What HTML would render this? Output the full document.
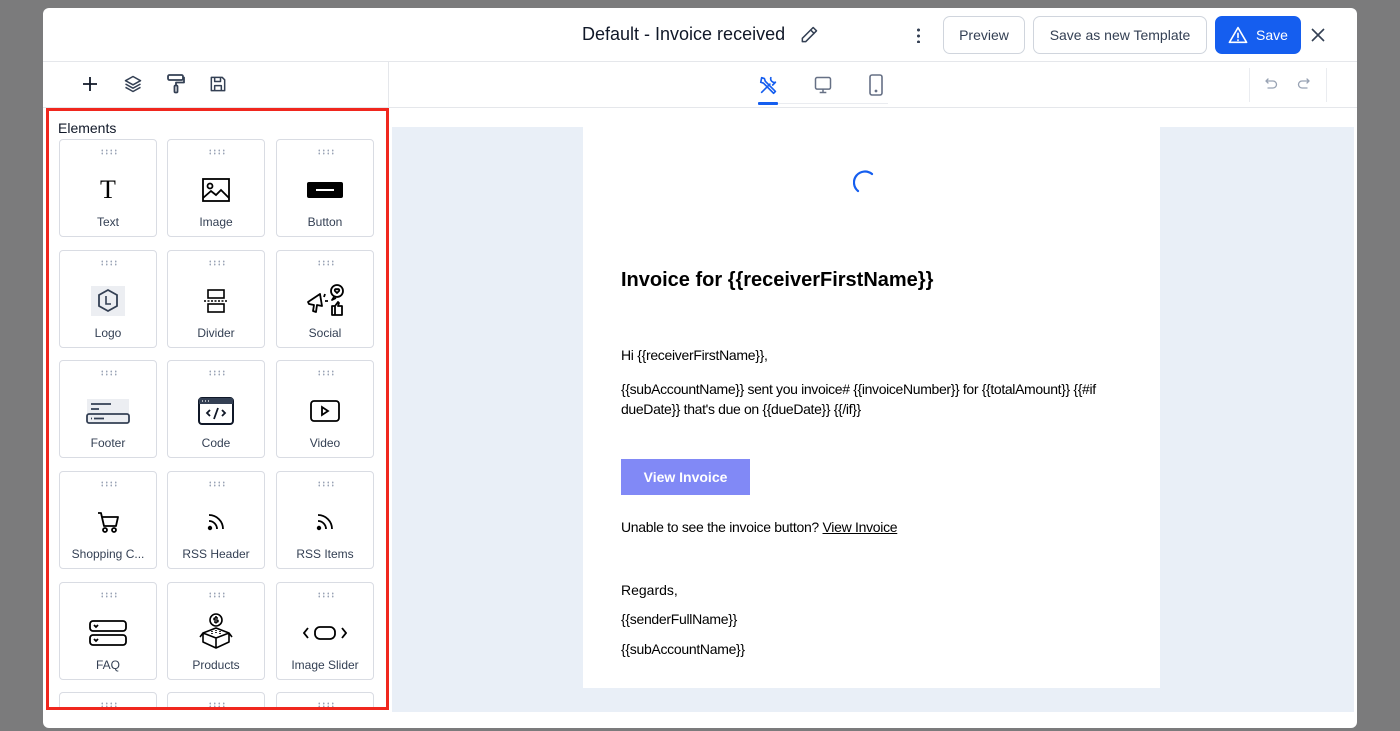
<!DOCTYPE html>
<html style="overflow:hidden"><head><meta charset="utf-8"><style>
*{box-sizing:border-box;margin:0;padding:0}
html,body{width:1400px;height:731px;overflow:hidden}
body{background:#7b7b7c;font-family:"Liberation Sans",sans-serif;position:relative}
.modal{position:absolute;left:43px;top:8px;width:1314px;height:720px;background:#fff;border-radius:6px;overflow:hidden}
.a{position:absolute}
.btn{position:absolute;top:8px;height:38px;border:1px solid #d0d5dd;border-radius:7px;font-size:14px;color:#344054;display:flex;align-items:center;justify-content:center}
.card{position:absolute;width:98px;height:98px;border:1px solid #d9dce3;border-radius:4px;background:#fff}
.card .dots{position:absolute;left:40px;top:9px;width:18px;height:6px;background-image:radial-gradient(circle,#9aa3b5 0.8px,transparent 1px);background-size:4.5px 3px}
.card .ic{position:absolute;left:0;right:0;top:36px;height:28px;display:flex;justify-content:center;align-items:center}
.card .lb{position:absolute;left:0;right:0;top:75px;text-align:center;font-size:12px;color:#344054}
.et{position:absolute;left:38px;font-size:14px;color:#000;font-family:"Liberation Sans",Arial,sans-serif}
</style></head><body>
<div class="modal">
 <div class="a" style="left:0;top:53px;width:1314px;height:1px;background:#e5e7eb"></div>
 <div class="a" style="left:539px;top:16px;font-size:18px;color:#101828">Default - Invoice received</div>
 <svg class="a" style="left:756px;top:17px" width="20" height="20" viewBox="0 0 24 24" fill="none" stroke="#344054" stroke-width="1.8" stroke-linecap="round" stroke-linejoin="round"><path d="M17 3l4 4L8 20H4v-4z"/><path d="M14 6l4 4"/></svg>
 <div class="a" style="left:874px;top:19px;width:3px;height:16px;background:radial-gradient(circle,#344054 1.4px,transparent 1.6px);background-size:3px 6px"></div>
 <div class="btn" style="left:900px;width:82px">Preview</div>
 <div class="btn" style="left:990px;width:174px">Save as new Template</div>
 <div class="btn" style="left:1172px;width:86px;background:#155eef;border-color:#155eef;color:#fff"><svg width="20" height="18" viewBox="0 0 24 22" fill="none" stroke="#fff" stroke-width="2" stroke-linejoin="round" stroke-linecap="round" style="margin-right:8px"><path d="M12 2L1.5 20h21z"/><path d="M12 9v5M12 17v.5"/></svg>Save</div>
 <svg class="a" style="left:1267px;top:19px" width="16" height="16" viewBox="0 0 16 16" stroke="#344054" stroke-width="1.6"><path d="M2 2l12 12M14 2L2 14"/></svg>
 <div class="a" style="left:345px;top:54px;width:1px;height:45px;background:#e5e7eb"></div>
 <div class="a" style="left:0;top:99px;width:1314px;height:1px;background:#e5e7eb"></div>
 <svg class="a" style="left:39px;top:68px" width="16" height="16" viewBox="0 0 16 16" stroke="#101828" stroke-width="1.8"><path d="M8 1v14M1 8h14"/></svg>
 <svg class="a" style="left:80px;top:66px" width="20" height="20" viewBox="0 0 24 24" fill="none" stroke="#344054" stroke-width="1.8" stroke-linejoin="round"><path d="M12 3l9 5-9 5-9-5z"/><path d="M3 12l9 5 9-5M3 16l9 5 9-5"/></svg>
 <svg class="a" style="left:123px;top:65px" width="20" height="22" viewBox="0 0 20 22" fill="none" stroke="#344054" stroke-width="1.8" stroke-linejoin="round"><rect x="2" y="2" width="15" height="5" rx="1.5"/><path d="M17 4.5h1v5H10v3"/><rect x="8.5" y="12.5" width="3" height="7" rx="1"/></svg>
 <svg class="a" style="left:165px;top:66px" width="20" height="20" viewBox="0 0 24 24" fill="none" stroke="#344054" stroke-width="1.8" stroke-linejoin="round"><path d="M4 4h13l3 3v13H4z"/><path d="M8 4v5h7V4M8 20v-6h8v6"/></svg>
 <svg class="a" style="left:715px;top:66px" width="22" height="22" viewBox="0 0 24 24" fill="none" stroke="#155eef" stroke-width="1.8" stroke-linecap="round" stroke-linejoin="round"><path d="M4 20l9-9M14 4a4 4 0 0 0 5 5l-3 3M4 4l3 1 1 3 11 11-2 2L6 10 3 9z"/></svg>
 <div class="a" style="left:715px;top:94px;width:20px;height:3px;background:#155eef;border-radius:1px"></div>
 <div class="a" style="left:735px;top:95px;width:110px;height:1px;background:#eaecf0"></div>
 <svg class="a" style="left:770px;top:67px" width="20" height="20" viewBox="0 0 24 24" fill="none" stroke="#667085" stroke-width="1.8" stroke-linejoin="round"><rect x="3" y="3" width="18" height="14" rx="2"/><path d="M12 17v4M8 21h8"/></svg>
 <svg class="a" style="left:823px;top:66px" width="20" height="22" viewBox="0 0 20 22" fill="none" stroke="#667085" stroke-width="1.6"><rect x="4" y="1" width="12" height="20" rx="2"/><circle cx="10" cy="17" r=".6" fill="#667085"/></svg>
 <div class="a" style="left:1206px;top:60px;width:1px;height:34px;background:#eaecf0"></div>
 <div class="a" style="left:1283px;top:60px;width:1px;height:34px;background:#eaecf0"></div>
 <svg class="a" style="left:1222px;top:69px" width="14" height="14" viewBox="0 0 14 14" fill="none" stroke="#98a2b3" stroke-width="1.3" stroke-linecap="round"><path d="M3 2L1 4l2 2M1 4h7a3.5 3.5 0 0 1 0 7H3"/></svg>
 <svg class="a" style="left:1253px;top:69px" width="14" height="14" viewBox="0 0 14 14" fill="none" stroke="#98a2b3" stroke-width="1.3" stroke-linecap="round"><path d="M11 2l2 2-2 2M13 4H6a3.5 3.5 0 0 0 0 7h5"/></svg>
 <div class="a" style="left:349px;top:119px;width:962px;height:585px;background:#e9eff7"></div>
 <div class="a" style="left:540px;top:119px;width:577px;height:561px;background:#fff">
  <svg class="a" style="left:270px;top:42px" width="24" height="30" viewBox="0 0 24 30" fill="none" stroke="#155eef" stroke-width="2.2" stroke-linecap="round"><path d="M19 5A10 10 0 0 0 5 22"/></svg>
  <div class="et" style="top:142px;font-size:20px;font-weight:bold">Invoice for {{receiverFirstName}}</div>
  <div class="et" style="top:220px;letter-spacing:-0.3px">Hi {{receiverFirstName}},</div>
  <div class="et" style="top:252px;line-height:20px;width:500px;letter-spacing:-0.35px">{{subAccountName}} sent you invoice# {{invoiceNumber}} for {{totalAmount}} {{#if dueDate}} that's due on {{dueDate}} {{/if}}</div>
  <div class="a" style="left:38px;top:332px;width:129px;height:36px;background:#8189f6;color:#fff;font-size:14px;font-weight:bold;display:flex;align-items:center;justify-content:center">View Invoice</div>
  <div class="et" style="top:392px;letter-spacing:-0.3px">Unable to see the invoice button? <u>View Invoice</u></div>
  <div class="et" style="top:455px">Regards,</div>
  <div class="et" style="top:484px;letter-spacing:-0.3px">{{senderFullName}}</div>
  <div class="et" style="top:514px;letter-spacing:-0.3px">{{subAccountName}}</div>
 </div>
 <div class="a" style="left:3px;top:100px;width:343px;height:602px;border:3px solid #f0271e;overflow:hidden">
  <div class="a" style="left:9px;top:9px;font-size:14px;color:#101828">Elements</div>
  <div style="position:absolute;left:-49px;top:-111px">
   <div class="card" style="left:59px;top:139px"><div class="dots"></div><div class="ic"><span style="font-family:'Liberation Serif',serif;font-size:26px;color:#000">T</span></div><div class="lb">Text</div></div>
   <div class="card" style="left:167px;top:139px"><div class="dots"></div><div class="ic"><svg width="28" height="24" viewBox="0 0 28 24" fill="none" stroke="#000" stroke-width="1.8"><rect x="1" y="1" width="26" height="22"/><circle cx="8" cy="8" r="2.5"/><path d="M1 20l8-7 5 4 5-5 8 8"/></svg></div><div class="lb">Image</div></div>
   <div class="card" style="left:276px;top:139px"><div class="dots"></div><div class="ic"><svg width="36" height="16"><rect width="36" height="16" rx="2" fill="#000"/><rect x="9" y="7" width="18" height="2" fill="#fff"/></svg></div><div class="lb">Button</div></div>

   <div class="card" style="left:59px;top:250px"><div class="dots"></div><div class="ic"><svg width="34" height="30" viewBox="0 0 34 30"><rect width="34" height="30" fill="#eceef2"/><path d="M17 4l9 5v11l-9 5-9-5V9z" fill="none" stroke="#344054" stroke-width="1.8"/><path d="M15 10v8h5" fill="none" stroke="#344054" stroke-width="1.6"/></svg></div><div class="lb">Logo</div></div>
   <div class="card" style="left:167px;top:250px"><div class="dots"></div><div class="ic"><svg width="26" height="24" viewBox="0 0 26 24" fill="none" stroke="#000" stroke-width="1.6"><rect x="5" y="1" width="16" height="8"/><rect x="5" y="15" width="16" height="8"/><path d="M1 12h24" stroke-dasharray="2 1.5"/></svg></div><div class="lb">Divider</div></div>
   <div class="card" style="left:276px;top:250px"><div class="dots"></div><div class="ic"><svg width="40" height="34" viewBox="0 0 40 34" fill="none" stroke="#000" stroke-width="1.8" stroke-linejoin="round"><path d="M3 18l12-8 2 12-5-1-1 7-3-1 1-6-5-1z"/><path d="M19 13l1-3M20 17h3"/><circle cx="32" cy="7" r="6"/><path d="M29 13l-2 3 4-2"/><path d="M32 9l-2-2a1.2 1.2 0 0 1 2-1.5 1.2 1.2 0 0 1 2 1.5z"/><path d="M27 22h3v9h-3zM30 22l3-4 1 1-1 3h4v9h-7"/></svg></div><div class="lb">Social</div></div>

   <div class="card" style="left:59px;top:360px"><div class="dots"></div><div class="ic"><svg width="44" height="26" viewBox="0 0 44 26"><rect x="1" y="1" width="42" height="24" fill="#eceef2"/><path d="M5 6h20M5 11h8" stroke="#344054" stroke-width="1.8"/><rect x="1" y="16" width="42" height="9" rx="2" fill="none" stroke="#344054" stroke-width="1.8"/><path d="M5 20.5h1M8 20.5h10" stroke="#344054" stroke-width="1.8"/></svg></div><div class="lb">Footer</div></div>
   <div class="card" style="left:167px;top:360px"><div class="dots"></div><div class="ic"><svg width="36" height="28" viewBox="0 0 36 28"><rect x="1" y="1" width="34" height="26" rx="3" fill="none" stroke="#101828" stroke-width="2"/><rect x="1" y="1" width="34" height="6" fill="#344054"/><path d="M4 4h1M7 4h1M10 4h1" stroke="#fff" stroke-width="1.3"/><path d="M12 13l-3 3 3 3M24 13l3 3-3 3M20 11l-4 11" fill="none" stroke="#101828" stroke-width="1.8"/></svg></div><div class="lb">Code</div></div>
   <div class="card" style="left:276px;top:360px"><div class="dots"></div><div class="ic"><svg width="30" height="22" viewBox="0 0 30 22" fill="none" stroke="#000" stroke-width="1.8"><rect x="1" y="1" width="28" height="20" rx="3"/><path d="M12 7v8l6-4z"/></svg></div><div class="lb">Video</div></div>

   <div class="card" style="left:59px;top:471px"><div class="dots"></div><div class="ic"><svg width="22" height="22" viewBox="0 0 22 22" fill="none" stroke="#000" stroke-width="1.8" stroke-linejoin="round"><path d="M1 2h3l3 13h12l2-9H5"/><circle cx="8" cy="19" r="2"/><circle cx="17" cy="19" r="2"/></svg></div><div class="lb">Shopping C...</div></div>
   <div class="card" style="left:167px;top:471px"><div class="dots"></div><div class="ic"><svg width="18" height="18" viewBox="0 0 18 18" fill="none" stroke="#000" stroke-width="1.8"><path d="M2 8a8 8 0 0 1 8 8M2 2a14 14 0 0 1 14 14"/><circle cx="3" cy="15" r="1.3" fill="#000"/></svg></div><div class="lb">RSS Header</div></div>
   <div class="card" style="left:276px;top:471px"><div class="dots"></div><div class="ic"><svg width="18" height="18" viewBox="0 0 18 18" fill="none" stroke="#000" stroke-width="1.8"><path d="M2 8a8 8 0 0 1 8 8M2 2a14 14 0 0 1 14 14"/><circle cx="3" cy="15" r="1.3" fill="#000"/></svg></div><div class="lb">RSS Items</div></div>

   <div class="card" style="left:59px;top:582px"><div class="dots"></div><div class="ic"><svg width="38" height="26" viewBox="0 0 38 26" fill="none" stroke="#000" stroke-width="1.8"><rect x="1" y="1" width="36" height="10" rx="3"/><rect x="1" y="15" width="36" height="10" rx="3"/><path d="M5 5l2 2 2-2M5 19l2 2 2-2"/></svg></div><div class="lb">FAQ</div></div>
   <div class="card" style="left:167px;top:582px"><div class="dots"></div><div class="ic" style="top:30px;height:36px"><svg width="34" height="36" viewBox="0 0 34 36" fill="none" stroke="#000" stroke-width="1.6" stroke-linejoin="round"><circle cx="17" cy="7" r="6"/><path d="M19 5h-3a1 1 0 0 0 0 2h2a1 1 0 0 1 0 2h-3M17 3v1.5M17 9v1.5"/><path d="M4 20l13-5 13 5-13 5zM4 20v9l13 6 13-6v-9M17 25v10M1 24l3-4M33 24l-3-4"/><path d="M13 18v3M17 17v4M21 18v3" stroke-dasharray="1 1"/></svg></div><div class="lb">Products</div></div>
   <div class="card" style="left:276px;top:582px"><div class="dots"></div><div class="ic"><svg width="44" height="18" viewBox="0 0 44 18" fill="none" stroke="#000" stroke-width="1.8"><path d="M5 4l-4 5 4 5M39 4l4 5-4 5"/><rect x="12" y="3" width="20" height="12" rx="5"/></svg></div><div class="lb">Image Slider</div></div>

   <div class="card" style="left:59px;top:692px"><div class="dots"></div></div>
   <div class="card" style="left:167px;top:692px"><div class="dots"></div></div>
   <div class="card" style="left:276px;top:692px"><div class="dots"></div></div>
  </div>
 </div>
</div>
</body></html>
